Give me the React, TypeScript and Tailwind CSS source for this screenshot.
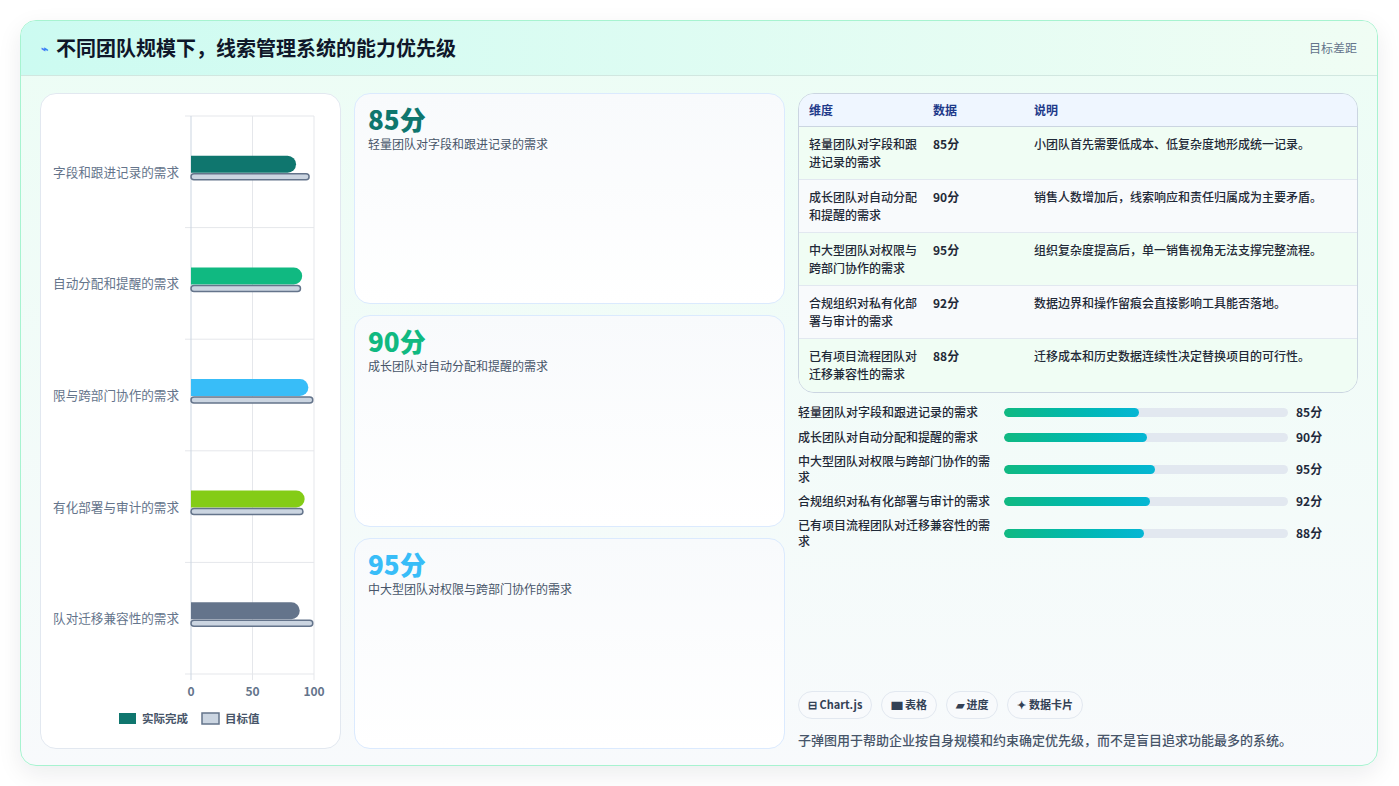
import React from 'react';

const rows = [
  { name: '轻量团队对字段和跟进记录的需求', short: ['轻量团队对字段和跟', '进记录的需求'], v: 85, t: 96, color: '#0f766e', text: 'text-[#0f766e]', note: '小团队首先需要低成本、低复杂度地形成统一记录。' },
  { name: '成长团队对自动分配和提醒的需求', short: ['成长团队对自动分配', '和提醒的需求'], v: 90, t: 89, color: '#10b981', text: 'text-[#10b981]', note: '销售人数增加后，线索响应和责任归属成为主要矛盾。' },
  { name: '中大型团队对权限与跨部门协作的需求', short: ['中大型团队对权限与', '跨部门协作的需求'], v: 95, t: 99, color: '#38bdf8', text: 'text-[#38bdf8]', note: '组织复杂度提高后，单一销售视角无法支撑完整流程。' },
  { name: '合规组织对私有化部署与审计的需求', short: ['合规组织对私有化部', '署与审计的需求'], v: 92, t: 91, color: '#84cc16', text: 'text-[#84cc16]', note: '数据边界和操作留痕会直接影响工具能否落地。' },
  { name: '已有项目流程团队对迁移兼容性的需求', short: ['已有项目流程团队对', '迁移兼容性的需求'], v: 88, t: 99, color: '#64748b', text: 'text-[#64748b]', note: '迁移成本和历史数据连续性决定替换项目的可行性。' },
];

const font = { fontFamily: '"Noto Sans CJK SC", "Noto Sans", sans-serif' };

function Chart() {
  const L = 150, R = 273, T = 22, B = 580;
  const band = (B - T) / 5;
  const x = (v: number) => L + ((R - L) * v) / 100;
  return (
    <svg width="300" height="654" className="block" style={font}>
      <defs>
        <clipPath id="lab"><rect x="12" y="0" width="130" height="654" /></clipPath>
      </defs>
      {[0, 1, 2, 3, 4, 5].map((i) => (
        <line key={i} x1={L - 6} x2={R} y1={T + band * i} y2={T + band * i} stroke="#e5e7eb" />
      ))}
      {[0, 50, 100].map((v) => (
        <g key={v}>
          <line x1={x(v)} x2={x(v)} y1={T} y2={B + 6} stroke={v === 0 ? '#cbd5e1' : '#e5e7eb'} />
          <text x={x(v)} y={602} textAnchor="middle" fontSize="12" fontWeight="600" fill="#64748b">{v}</text>
        </g>
      ))}
      {rows.map((r, i) => {
        const c = T + band * i + band / 2;
        return (
          <g key={i}>
            <text x={138} y={c + 5} textAnchor="end" fontSize="12.6" fill="#64748b" clipPath="url(#lab)">{r.name}</text>
            <path d={`M${L} ${c - 16} H${x(r.v) - 8} a8.5 8.5 0 0 1 0 17 H${L} Z`} fill={r.color} />
            <rect x={L} y={c + 2} width={x(r.t) - L} height={6} rx={3} fill="#cbd5e1" stroke="#64748b" strokeWidth="1.5" />
          </g>
        );
      })}
      <rect x="78" y="619" width="17" height="11" fill="#0f766e" />
      <text x="101" y="629" fontSize="11.5" fontWeight="600" fill="#475569">实际完成</text>
      <rect x="161" y="619" width="17" height="11" fill="#cbd5e1" stroke="#64748b" strokeWidth="1.5" />
      <text x="184" y="629" fontSize="11.5" fontWeight="600" fill="#475569">目标值</text>
    </svg>
  );
}

export default function App() {
  return (
    <div className="w-[1399px] h-[786px] bg-white p-5" style={font}>
      <div className="h-[746px] w-[1358px] rounded-2xl border border-[#a7f3d0] bg-gradient-to-b from-[#ecfdf5] to-[#f8fafc] shadow-[0_8px_24px_rgba(15,23,42,0.08)] overflow-hidden flex flex-col">
        <div className="h-[55px] shrink-0 flex items-center justify-between px-5 bg-gradient-to-r from-[#ccfbf1] to-[#f0fdf4] border-b border-[#d1e7e0]">
          <div className="flex items-center gap-2">
            <span className="text-[#3b82f6] text-[12px] font-bold">⌁</span>
            <h1 className="text-[20px] font-bold text-[#0f172a]">不同团队规模下，线索管理系统的能力优先级</h1>
          </div>
          <span className="text-[12px] text-[#64748b]">目标差距</span>
        </div>
        <div className="flex-1 flex gap-[13px] px-[19px] pt-[17px] pb-[18px]">
          <div className="w-[301px] rounded-2xl border border-[#e2e8f0] bg-white">
            <Chart />
          </div>
          <div className="w-[431px] flex flex-col gap-[11px]">
            {rows.slice(0, 3).map((r) => (
              <div key={r.v} className="flex-1 rounded-2xl border border-[#dbeafe] bg-gradient-to-b from-[#f8fafc] to-white px-[13px] py-[9px]">
                <div className={`text-[26px] font-extrabold leading-8 ${r.text}`}>{r.v}分</div>
                <div className="text-[12px] text-[#475569]">{r.name}</div>
              </div>
            ))}
          </div>
          <div className="flex-1 flex flex-col">
            <div className="rounded-2xl border border-[#cbd5e1] overflow-hidden text-[12px]">
              <div className="flex h-[33px] items-center bg-[#eff6ff] border-b border-[#cbd5e1] font-bold text-[#1e3a8a]">
                <div className="w-[134px] pl-[10px]">维度</div>
                <div className="w-[101px]">数据</div>
                <div>说明</div>
              </div>
              {rows.map((r, i) => (
                <div key={i} className={`flex h-[53px] pt-[8px] text-[#1f2937] ${i < 4 ? 'border-b border-[#e2e8f0]' : ''} ${i % 2 === 0 ? 'bg-[#f0fdf4]' : 'bg-[#f8fafc]'}`}>
                  <div className="w-[134px] pl-[10px] leading-[18px] font-medium">{r.short[0]}<br />{r.short[1]}</div>
                  <div className="w-[101px] leading-[18px] font-semibold">{r.v}分</div>
                  <div className="leading-[18px] font-medium">{r.note}</div>
                </div>
              ))}
            </div>
            <div className="mt-[10px] flex flex-col gap-[7px] text-[12px] text-[#1f2937] font-medium">
              {rows.map((r, i) => (
                <div key={i} className="flex items-center">
                  <div className="w-[206px] leading-[16px] pr-2">{r.name}</div>
                  <div className="w-[284px] h-[9px] rounded-full bg-[#e2e8f0] overflow-hidden">
                    <div className="h-full rounded-full bg-gradient-to-r from-[#10b981] to-[#06b6d4]" style={{ width: `${r.v * 0.56}%` }} />
                  </div>
                  <div className="ml-2 font-bold text-[#1e293b]">{r.v}分</div>
                </div>
              ))}
            </div>
            <div className="mt-auto flex gap-[9px]">
              {['⊟ Chart.js', '▆ 表格', '▰ 进度', '✦ 数据卡片'].map((t) => (
                <span key={t} className="h-[28px] px-[9px] flex items-center rounded-full border border-[#e2e8f0] bg-[#f8fafc] text-[11px] font-bold text-[#334155]">{t}</span>
              ))}
            </div>
            <div className="mt-[11px] text-[13px] text-[#475569] font-medium">子弹图用于帮助企业按自身规模和约束确定优先级，而不是盲目追求功能最多的系统。</div>
          </div>
        </div>
      </div>
    </div>
  );
}
